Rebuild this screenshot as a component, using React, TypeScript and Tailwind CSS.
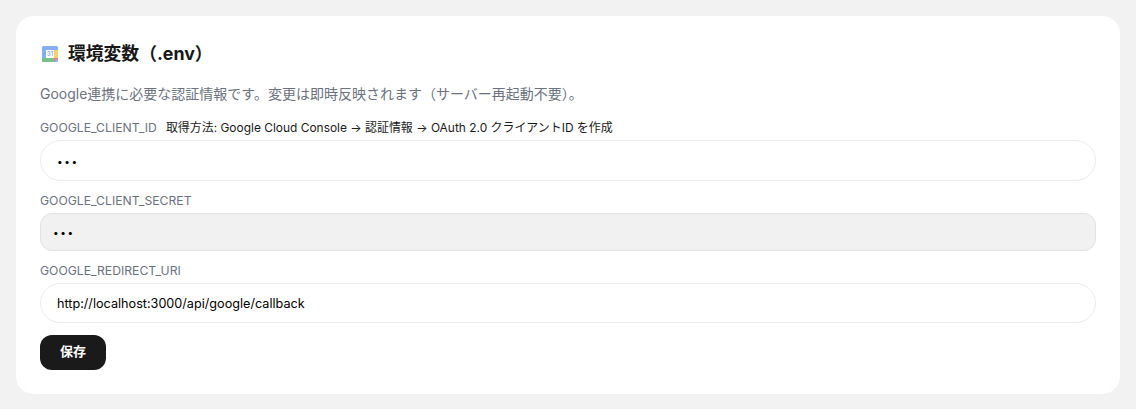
const font = "[font-family:Inter,'Noto_Sans_CJK_JP',sans-serif]";

function CalendarIcon() {
  return (
    <svg width="16" height="16" viewBox="0 0 16 16" className="shrink-0">
      <rect x="0" y="0" width="16" height="16" rx="1.5" fill="#82aff5" />
      <rect x="12" y="4" width="4" height="8" fill="#f6d264" />
      <path d="M0 12 H12 V16 H1.5 A1.5 1.5 0 0 1 0 14.5 Z" fill="#79bf8c" />
      <path d="M12 12 H16 L12 16 Z" fill="#ee8478" />
      <rect x="4" y="4" width="8" height="8" fill="#ffffff" />
      <text x="8" y="10.3" textAnchor="middle" fontSize="6" fill="#5b8fe8" fontFamily="Inter, sans-serif">31</text>
    </svg>
  );
}

export default function App() {
  return (
    <div className={`h-[409px] bg-[#f2f2f2] p-4 ${font}`}>
      <div className="h-[378px] rounded-[18px] bg-white px-6 pt-6">
        <div className="flex h-7 items-center gap-[10px] pl-[2px]">
          <CalendarIcon />
          <h2 className="text-[17.8px] font-bold leading-7 text-[#171717]">環境変数（.env）</h2>
        </div>
        <p className="mt-[15px] text-[14px] leading-[22px] text-[#6b7280]">
          Google連携に必要な認証情報です。変更は即時反映されます（サーバー再起動不要）。
        </p>
        <div className="mt-[14px] flex h-[18px] items-center text-[12.2px]">
          <span className="text-[#6b7280]">GOOGLE_CLIENT_ID</span>
          <span className="ml-[9px] text-[11.95px] text-[#1a1a1a]">取得方法: Google Cloud Console → 認証情報 → OAuth 2.0 クライアントID を作成</span>
        </div>
        <input
          type="password"
          readOnly
          value="abc"
          className="mt-[3px] block h-[41px] w-full rounded-full border border-[#ececec] bg-white px-4 text-[10px] tracking-[1.6px] text-black outline-none"
        />
        <div className="mt-[11px] h-[18px] text-[12.2px] leading-[18px] text-[#6b7280]">GOOGLE_CLIENT_SECRET</div>
        <input
          type="password"
          readOnly
          value="abc"
          className="mt-[3px] block h-[38px] w-full rounded-[12px] border border-[#e2e2e2] bg-[#f1f1f1] px-3 text-[10px] tracking-[1.6px] text-black outline-none"
        />
        <div className="mt-[11px] h-[18px] text-[12.2px] leading-[18px] text-[#6b7280]">GOOGLE_REDIRECT_URI</div>
        <input
          type="text"
          readOnly
          value="http://localhost:3000/api/google/callback"
          className="mt-[3px] block h-[40px] w-full rounded-full border border-[#ececec] bg-white px-4 text-[12.65px] text-black outline-none"
        />
        <button className="mt-[12px] block h-[35px] w-[66px] rounded-[12px] bg-[#1a1a1a] pb-[2px] text-[13px] font-bold text-white">
          保存
        </button>
      </div>
    </div>
  );
}
